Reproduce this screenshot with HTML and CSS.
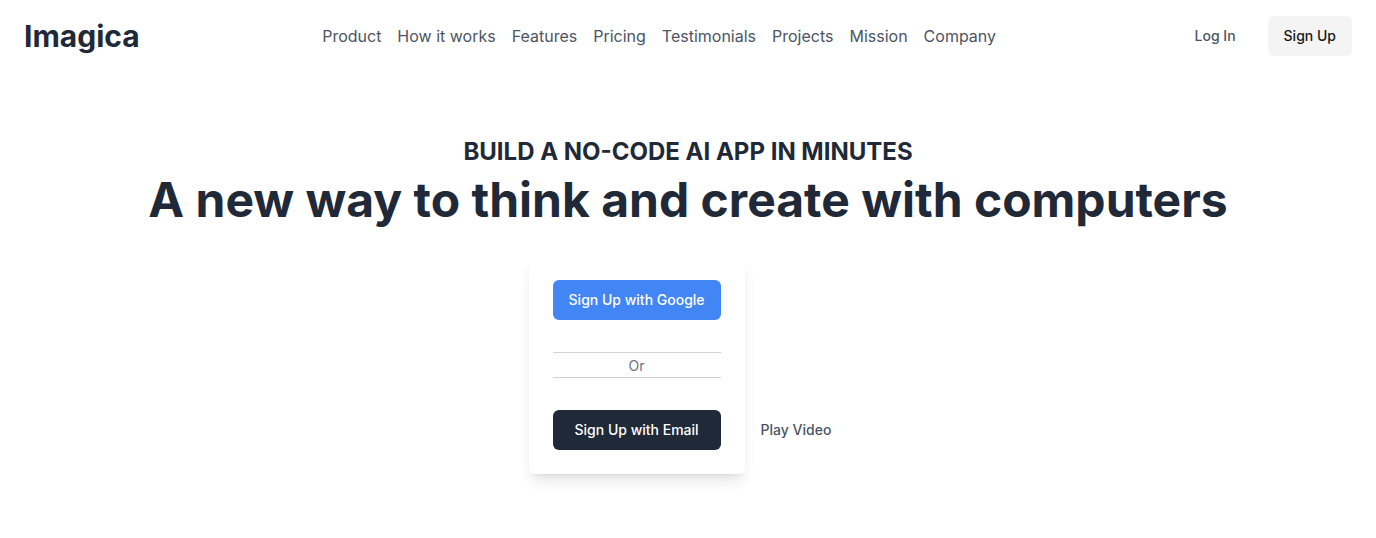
FILE: index.html
```html
<!DOCTYPE html>
<html lang="en">
<head>
<meta charset="utf-8">
<meta name="viewport" content="width=device-width, initial-scale=1">
<title>Imagica</title>
<link rel="stylesheet" href="styles.css">
</head>
<body>
<header class="header">
  <a class="brand" href="#">Imagica</a>
  <nav class="nav" aria-label="Main">
    <a href="#">Product</a>
    <a href="#">How it works</a>
    <a href="#">Features</a>
    <a href="#">Pricing</a>
    <a href="#">Testimonials</a>
    <a href="#">Projects</a>
    <a href="#">Mission</a>
    <a href="#">Company</a>
  </nav>
  <div class="account">
    <button class="btn btn-ghost" type="button">Log In</button>
    <button class="btn btn-muted" type="button">Sign Up</button>
  </div>
</header>
<main class="hero">
  <h2 class="eyebrow">BUILD A NO-CODE AI APP IN MINUTES</h2>
  <h1 class="title">A new way to think and create with computers</h1>
  <div class="actions">
    <div class="card">
      <button class="btn btn-google" type="button">Sign Up with Google</button>
      <div class="divider"><span class="divider-label">Or</span></div>
      <button class="btn btn-email" type="button">Sign Up with Email</button>
    </div>
    <button class="btn btn-ghost btn-video" type="button">Play Video</button>
  </div>
</main>
</body>
</html>
```
FILE: styles.css
```css
*, *::before, *::after { box-sizing: border-box; }

body {
  margin: 0;
  background: #fff;
  color: #1f2937;
  font-family: Inter, sans-serif;
  font-size: 16px;
  line-height: 24px;
}

a { color: inherit; text-decoration: none; }

.header {
  display: flex;
  align-items: center;
  justify-content: space-between;
  padding: 16px 24px;
}

.brand {
  font-size: 30px;
  font-weight: 700;
  line-height: 36px;
}

.nav {
  display: flex;
  gap: 16px;
  color: #4b5563;
}

.account { display: flex; gap: 16px; }

.btn {
  height: 40px;
  padding: 8px 16px;
  border: 0;
  border-radius: 6px;
  background: transparent;
  font-family: inherit;
  font-size: 14px;
  font-weight: 500;
  line-height: 20px;
  cursor: pointer;
}

.btn-ghost { color: #4b5563; }
.btn-muted { background: #f4f4f4; color: #18181b; }
.btn-google { background: #4285f4; color: #fff; }
.btn-email { background: #1f2937; color: #fff; }

.hero {
  padding: 64px 24px;
  text-align: center;
}

.eyebrow {
  margin: 0;
  font-size: 24px;
  font-weight: 700;
  line-height: 32px;
}

.title {
  margin: 8px 0 0;
  font-size: 48px;
  font-weight: 700;
  line-height: 48px;
}

.actions {
  display: flex;
  align-items: flex-end;
  justify-content: center;
  margin-top: 32px;
}

.card {
  display: flex;
  flex-direction: column;
  gap: 32px;
  padding: 24px;
  border-radius: 6px;
  box-shadow: 0 10px 15px -3px rgb(0 0 0 / 10%), 0 4px 6px -4px rgb(0 0 0 / 10%);
}

.divider {
  border: solid #d2d3d5;
  border-width: 1px 0;
}

.divider-label {
  color: #6b7280;
  font-size: 14px;
  line-height: 20px;
}

.btn-video { margin-bottom: 24px; }
```
